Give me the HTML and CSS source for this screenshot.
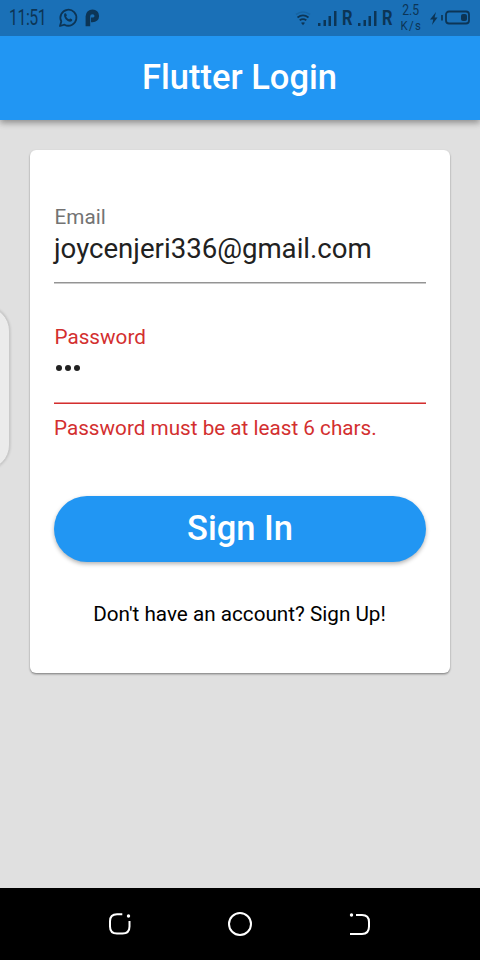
FILE: index.html
```html
<!DOCTYPE html>
<html lang="en">
<head>
<meta charset="utf-8">
<title>Flutter Login</title>
<link rel="stylesheet" href="styles.css">
</head>
<body>
<div class="screen">
  <header class="top">
    <div class="status">
      <span class="clock"><span>11:51</span></span>
      <svg class="whatsapp" width="20" height="20" viewBox="0 0 20 20" fill="none" stroke="currentColor">
        <path d="M2 18l1.300-4.600A8 8 0 1 1 6.500 16.700z" stroke-width="1.800" stroke-linejoin="round"/>
        <path d="M6.500 5.600c.8-.8 1.500-.5 1.800.3l.5 1.300c.2.500-.8 1-.6 1.500.6 1.200 1.500 2 2.700 2.600.5.200 1-.9 1.500-.7l1.500.7c.6.400.400 1.400-.3 2-2.800 2.200-9.300-3.600-7.100-7.700z" fill="currentColor" stroke="none"/>
      </svg>
      <svg class="palmpay" width="15" height="18" viewBox="0 0 15 18" fill="none" stroke="currentColor" stroke-width="4.600">
        <path d="M2.900 17.300V7.300C2.900 4.300 5 2.900 7.500 2.900c2.600 0 4.300 1.700 4.300 4s-1.700 4-4.300 4H6"/>
      </svg>
      <span class="gap"></span>
      <svg class="wifi" width="16" height="16" viewBox="0 0 16 16" fill="none" stroke="currentColor" stroke-width="1.700">
        <path d="M1 4.500q7-5 14 0" opacity=".2"/>
        <path d="M2.500 7.500q5.500-4.200 11 0M4.700 10.300q3.300-2.500 6.600 0"/>
        <path d="M6 12.800q2-1.300 4 0l-2 2.500z" fill="currentColor" stroke="none"/>
      </svg>
      <svg class="signal" width="20" height="15" viewBox="0 0 20 15" fill="currentColor">
        <rect x="0" y="12" width="2.500" height="3"/><rect x="5.500" y="9" width="2.500" height="6"/><rect x="10.500" y="5" width="2.500" height="10"/><rect x="16" y="0" width="2.500" height="15"/>
      </svg>
      <span class="roaming"><span>R</span></span>
      <svg class="signal" width="20" height="15" viewBox="0 0 20 15" fill="currentColor">
        <rect x="0" y="12" width="2.500" height="3"/><rect x="5.500" y="9" width="2.500" height="6"/><rect x="10.500" y="5" width="2.500" height="10"/><rect x="16" y="0" width="2.500" height="15"/>
      </svg>
      <span class="roaming"><span>R</span></span>
      <span class="speed"><span>2.5</span><span class="unit">K/s</span></span>
      <svg class="battery" width="40" height="16" viewBox="0 0 40 16" fill="none" stroke="currentColor">
        <path d="M6 2L0 9.500h3.300L2 15l5.500-7.500H4.600z" fill="currentColor" stroke="none"/>
        <path d="M12 5v5.500" stroke-width="1.700"/>
        <rect x="16" y="1.500" width="23" height="12" rx="3" stroke-width="1.800"/>
        <rect x="31" y="4" width="6" height="7" rx="2" fill="currentColor" stroke="none"/>
      </svg>
    </div>
    <h1 class="title">Flutter Login</h1>
  </header>
  <main class="content">
    <form class="card">
      <div class="field">
        <div class="label">Email</div>
        <div class="value">joycenjeri336@gmail.com</div>
      </div>
      <div class="field invalid">
        <div class="label">Password</div>
        <div class="value dots"><i></i><i></i><i></i></div>
        <div class="error">Password must be at least 6 chars.</div>
      </div>
      <button class="submit" type="button">Sign In</button>
      <div class="signup">Don't have an account? Sign Up!</div>
    </form>
    <div class="edge-handle"></div>
  </main>
  <nav class="nav">
    <svg width="24" height="24" viewBox="0 0 24 24" fill="none" stroke="#fff" stroke-width="2">
      <path d="M14.300 2.300H9Q2 2.300 2 9.300v5.200q0 7 7 7h5.500q7 0 7-7V9"/><circle cx="20.500" cy="4" r="1.700" fill="#fff" stroke="none"/>
    </svg>
    <svg width="24" height="24" viewBox="0 0 24 24" fill="none" stroke="#fff" stroke-width="2"><circle cx="12" cy="12" r="11"/></svg>
    <svg width="24" height="24" viewBox="0 0 24 24" fill="none" stroke="#fff" stroke-width="2">
      <path d="M8 3h6q7 0 7 7v4.500q0 7.500-7 7.500H2"/><circle cx="3.500" cy="3" r="1.700" fill="#fff" stroke="none"/>
    </svg>
  </nav>
</div>
</body>
</html>
```
FILE: styles.css
```css
* { box-sizing: border-box; }
body { margin: 0; font-family: Roboto, sans-serif; }
.screen { width: 480px; height: 960px; display: flex; flex-direction: column; background: #e0e0e0; overflow: hidden; }
.top { height: 120px; background: #2196f3; box-shadow: 0 3px 6px rgba(0,0,0,.3), 0 1px 10px rgba(0,0,0,.1); z-index: 1; }
.status { height: 36px; background: #1a70b7; color: #0c3556; display: flex; align-items: center; padding: 0 10px 0 9px; }
.clock { width: 49px; font-size: 22px; line-height: 36px; letter-spacing: -.6px; white-space: nowrap; }
.clock span { display: inline-block; transform: scaleX(.72); transform-origin: 0 50%; }
.whatsapp { margin-right: 7px; }
.gap { flex: 1; }
.wifi { margin-right: 7px; }
.signal { margin-right: 4px; }
.roaming { width: 16px; font-size: 20px; font-weight: 700; line-height: 36px; }
.roaming span { display: inline-block; transform: scaleX(.82); transform-origin: 0 50%; }
.speed { width: 26px; margin: 0 1px 0 0; display: flex; flex-direction: column; align-items: center; font-size: 14px; line-height: 16px; }
.speed span { transform: scaleX(.87); }
.speed .unit { font-size: 13px; letter-spacing: 1.5px; }
.battery { margin-left: 5px; }
.title { margin: 0; padding-right: 1px; font-size: 34.5px; font-weight: 500; line-height: 82px; text-align: center; color: #fff; }
.content { flex: 1; position: relative; padding: 30px; }
.card { height: 523px; padding: 54px 24px 0; border-radius: 6px; background: #fff; box-shadow: 0 1px 2px rgba(0,0,0,.35), 0 2px 2px rgba(0,0,0,.1); }
.field { height: 120px; }
.label { height: 26px; padding-left: .5px; font-size: 20.7px; line-height: 26px; color: #737373; }
.value { height: 54px; padding-top: 3px; background: linear-gradient(#949494 50%, #cacaca 50%) bottom / 100% 2px no-repeat; font-size: 27.6px; line-height: 32px; color: #212121; white-space: nowrap; }
.invalid { height: 172px; }
.invalid .label, .error { color: #d32f2f; }
.invalid .value { background-image: linear-gradient(#e98f8f 50%, #d32f2f 50%); }
.dots { display: flex; gap: 3px; padding: 15px 0 0 2px; }
.dots i { width: 6px; height: 6px; border-radius: 50%; background: #212121; }
.error { margin-top: 11px; font-size: 20.7px; line-height: 26px; white-space: nowrap; }
.submit { display: block; width: 100%; height: 66px; padding: 0 0 2px; border: 0; border-radius: 33px; background: #2196f3; box-shadow: 0 2px 4px rgba(0,0,0,.3); color: #fff; font: 500 34.5px/64px Roboto, sans-serif; }
.signup { margin-top: 39px; padding-right: 1px; font-size: 20.7px; line-height: 26px; text-align: center; color: #000; white-space: nowrap; }
.edge-handle { position: absolute; left: -40px; top: 186px; width: 50px; height: 164px; border-radius: 28px; background: #ebebeb; border: 1px solid #cacaca; box-shadow: 0 0 3px rgba(0,0,0,.2); }
.nav { height: 72px; background: #000; display: flex; justify-content: space-between; align-items: center; padding: 0 108px; }
```
